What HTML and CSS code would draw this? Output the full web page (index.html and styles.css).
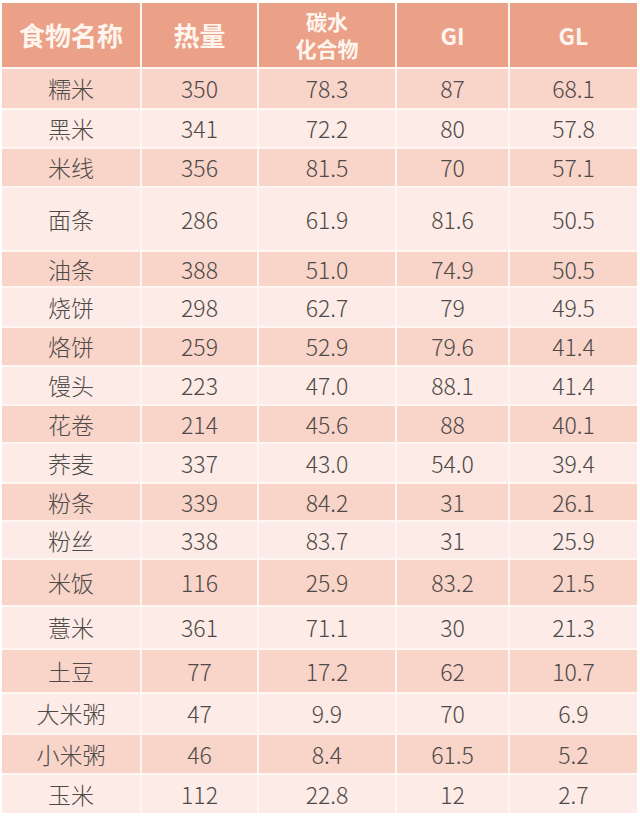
FILE: index.html
```html
<!DOCTYPE html>
<html lang="zh">
<head>
<meta charset="utf-8">
<title>食物GI GL表</title>
<link rel="stylesheet" href="styles.css">
</head>
<body>
<div class="table">
  <div class="row head"><div class="cn">食物名称</div><div class="cn">热量</div><div class="cn small">碳水<br>化合物</div><div class="en">GI</div><div class="en">GL</div></div>
  <div class="row pink"><div class="name">糯米</div><div>350</div><div>78.3</div><div>87</div><div>68.1</div></div>
  <div class="row light"><div class="name">黑米</div><div>341</div><div>72.2</div><div>80</div><div>57.8</div></div>
  <div class="row pink"><div class="name">米线</div><div>356</div><div>81.5</div><div>70</div><div>57.1</div></div>
  <div class="row light"><div class="name">面条</div><div>286</div><div>61.9</div><div>81.6</div><div>50.5</div></div>
  <div class="row pink"><div class="name">油条</div><div>388</div><div>51.0</div><div>74.9</div><div>50.5</div></div>
  <div class="row light"><div class="name">烧饼</div><div>298</div><div>62.7</div><div>79</div><div>49.5</div></div>
  <div class="row pink"><div class="name">烙饼</div><div>259</div><div>52.9</div><div>79.6</div><div>41.4</div></div>
  <div class="row light"><div class="name">馒头</div><div>223</div><div>47.0</div><div>88.1</div><div>41.4</div></div>
  <div class="row pink"><div class="name">花卷</div><div>214</div><div>45.6</div><div>88</div><div>40.1</div></div>
  <div class="row light"><div class="name">荞麦</div><div>337</div><div>43.0</div><div>54.0</div><div>39.4</div></div>
  <div class="row pink"><div class="name">粉条</div><div>339</div><div>84.2</div><div>31</div><div>26.1</div></div>
  <div class="row light"><div class="name">粉丝</div><div>338</div><div>83.7</div><div>31</div><div>25.9</div></div>
  <div class="row pink"><div class="name">米饭</div><div>116</div><div>25.9</div><div>83.2</div><div>21.5</div></div>
  <div class="row light"><div class="name">薏米</div><div>361</div><div>71.1</div><div>30</div><div>21.3</div></div>
  <div class="row pink"><div class="name">土豆</div><div>77</div><div>17.2</div><div>62</div><div>10.7</div></div>
  <div class="row light"><div class="name">大米粥</div><div>47</div><div>9.9</div><div>70</div><div>6.9</div></div>
  <div class="row pink"><div class="name">小米粥</div><div>46</div><div>8.4</div><div>61.5</div><div>5.2</div></div>
  <div class="row light"><div class="name">玉米</div><div>112</div><div>22.8</div><div>12</div><div>2.7</div></div>
</div>
</body>
</html>
```
FILE: styles.css
```css
html, body {
  margin: 0;
  padding: 0;
  background: #ffffff;
}
body {
  padding: 3px 0 0 2px;
  width: 640px;
  height: 822px;
  box-sizing: border-box;
}
.table {
  display: grid;
  grid-template-columns: 138px 115px 136px 111px 127px;
  grid-template-rows: 64px 39px 37px 37px 62px 34px 38px 37px 37px 36px 38px 36px 36px 45px 41px 42px 39px 38px 38px;
  gap: 2px;
  width: 635px;
  background: #fdf6f3;
  font-family: "Noto Sans CJK SC", sans-serif;
  font-weight: 300;
  color: #4e4a48;
}
.row {
  display: contents;
}
.row > div {
  display: flex;
  align-items: center;
  justify-content: center;
  text-align: center;
  font-size: 23px;
  line-height: 1;
}
.pink > div {
  background: #f8d4c9;
}
.light > div {
  background: #fcebe6;
}
.head > div {
  background: #eba088;
  color: #fef6ee;
  font-weight: 700;
}
.head .cn {
  font-size: 26px;
}
.head .small {
  font-size: 21px;
  line-height: 1.3;
}
.head .en {
  font-size: 23px;
}
```
